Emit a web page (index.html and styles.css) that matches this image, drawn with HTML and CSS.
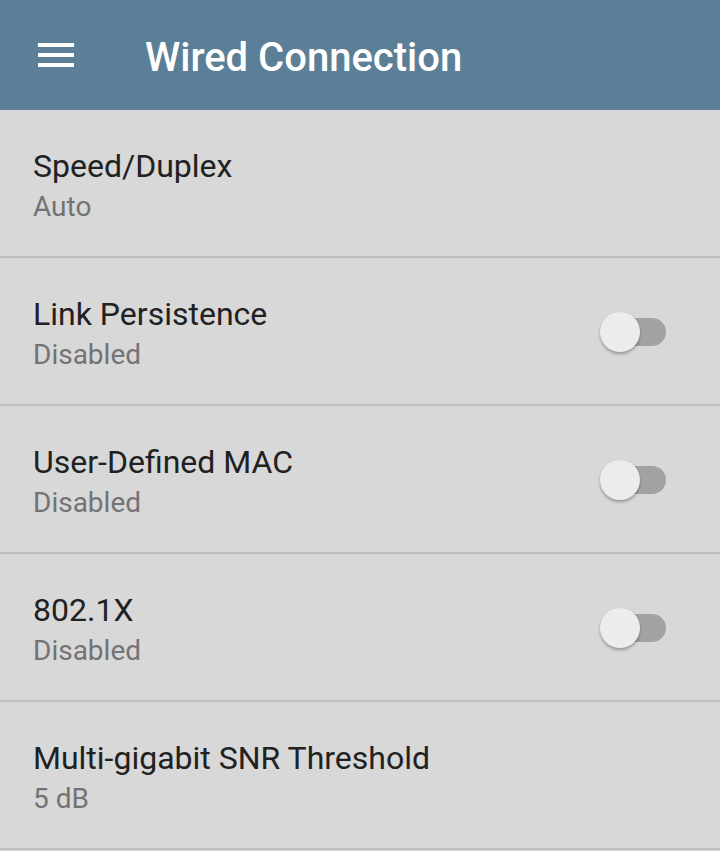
FILE: index.html
```html
<!DOCTYPE html>
<html lang="en">
<head>
    <meta charset="UTF-8">
    <meta name="viewport" content="width=device-width, initial-scale=1.0">
    <title>Wired Connection</title>
    <link rel="stylesheet" href="styles.css">
</head>
<body>
    <header class="toolbar">
        <button type="button" class="menu-btn" aria-label="Menu">
            <svg width="36" height="24" viewBox="0 0 36 24">
                <rect x="0" y="0" width="36" height="4" fill="#fff"/>
                <rect x="0" y="10" width="36" height="4" fill="#fff"/>
                <rect x="0" y="20" width="36" height="4" fill="#fff"/>
            </svg>
        </button>
        <h1 class="toolbar-title">Wired Connection</h1>
    </header>

    <ul class="settings-list">
        <li class="setting-row">
            <div class="setting-text">
                <div class="setting-title">Speed/Duplex</div>
                <div class="setting-value">Auto</div>
            </div>
        </li>
        <li class="setting-row">
            <div class="setting-text">
                <div class="setting-title">Link Persistence</div>
                <div class="setting-value">Disabled</div>
            </div>
            <span class="switch"><span class="switch-track"></span><span class="switch-thumb"></span></span>
        </li>
        <li class="setting-row">
            <div class="setting-text">
                <div class="setting-title">User-Defined MAC</div>
                <div class="setting-value">Disabled</div>
            </div>
            <span class="switch"><span class="switch-track"></span><span class="switch-thumb"></span></span>
        </li>
        <li class="setting-row">
            <div class="setting-text">
                <div class="setting-title">802.1X</div>
                <div class="setting-value">Disabled</div>
            </div>
            <span class="switch"><span class="switch-track"></span><span class="switch-thumb"></span></span>
        </li>
        <li class="setting-row">
            <div class="setting-text">
                <div class="setting-title">Multi-gigabit SNR Threshold</div>
                <div class="setting-value">5 dB</div>
            </div>
        </li>
    </ul>
</body>
</html>
```

FILE: styles.css
```css
body {
    font-family: Roboto, "Noto Sans", Arial, sans-serif;
    background-color: #d8d8d8;
    margin: 0px;
}

.toolbar {
    height: 110px;
    background-color: #5b7f96;
    display: flex;
    align-items: center;
}

.menu-btn {
    background: none;
    border: none;
    padding: 0;
    margin-left: 38px;
    width: 36px;
    height: 24px;
    display: flex;
}

.toolbar-title {
    margin: 6px 0 0 71px;
    color: #fff;
    font-size: 40px;
    font-weight: 500;
    line-height: 1;
}

.settings-list {
    list-style: none;
    margin: 0;
    padding: 0;
}

.setting-row {
    height: 146px;
    border-bottom: 2px solid #bfbfbf;
    display: flex;
    align-items: center;
    justify-content: space-between;
    padding: 0 54px 0 33px;
}

.setting-text {
    padding-top: 6px;
}

.setting-title {
    font-size: 32px;
    color: #212121;
    line-height: 42px;
}

.setting-value {
    font-size: 28px;
    color: #737373;
    line-height: 40px;
}

.switch {
    position: relative;
    width: 66px;
    height: 40px;
    margin-top: 2px;
}

.switch-track {
    position: absolute;
    left: 4px;
    right: 0;
    top: 6px;
    height: 28px;
    border-radius: 14px;
    background-color: #a2a2a2;
}

.switch-thumb {
    position: absolute;
    left: 0;
    top: 0;
    width: 40px;
    height: 40px;
    border-radius: 50%;
    background-color: #ececec;
    box-shadow: 0 2px 3px rgba(0, 0, 0, 0.3);
}
```
